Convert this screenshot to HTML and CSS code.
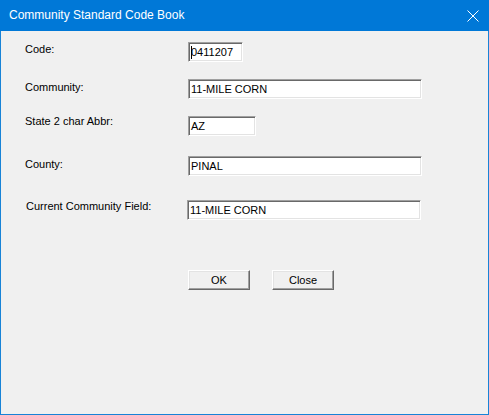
FILE: index.html
```html
<!DOCTYPE html>
<html>
<head>
<meta charset="utf-8">
<link rel="stylesheet" href="styles.css">
</head>
<body>
<div class="window">
  <div class="titlebar">
    <span class="title">Community Standard Code Book</span>
    <svg class="close" width="12" height="12" viewBox="0 0 12 12"><path d="M0.5 0.5 L11.5 11.5 M11.5 0.5 L0.5 11.5" stroke="#fff" stroke-width="1" fill="none"/></svg>
  </div>
  <div class="content">
    <div class="row">
      <span class="lbl">Code:</span>
      <div class="field w-code"><span class="caret"></span>0411207</div>
    </div>
    <div class="row row-gap">
      <span class="lbl lbl-down">Community:</span>
      <div class="field w-long">11-MILE CORN</div>
    </div>
    <div class="row row-gap">
      <span class="lbl lbl-up">State 2 char Abbr:</span>
      <div class="field w-abbr">AZ</div>
    </div>
    <div class="row row-gap-county">
      <span class="lbl lbl-down">County:</span>
      <div class="field w-long">PINAL</div>
    </div>
    <div class="row row-gap-current">
      <span class="lbl lbl-current">Current Community Field:</span>
      <div class="field w-long field-current">11-MILE CORN</div>
    </div>
    <div class="buttons">
      <button class="btn">OK</button>
      <button class="btn">Close</button>
    </div>
  </div>
</div>
</body>
</html>
```
FILE: styles.css
```css
html, body {
  margin: 0;
  padding: 0;
  background: #f0f0f0;
}
.window {
  width: 489px;
  height: 415px;
  box-sizing: border-box;
  border: 1px solid #1883d7;
  border-top: none;
  background: #f0f0f0;
  font-family: "Liberation Sans", Arial, sans-serif;
  font-size: 11px;
  color: #000;
  display: flex;
  flex-direction: column;
}
.titlebar {
  height: 31px;
  margin: 0 -1px;
  background: #0078d7;
  display: flex;
  align-items: center;
  justify-content: space-between;
  padding: 0 10px 0 9px;
  box-sizing: border-box;
}
.title {
  color: #fff;
  font-size: 12px;
  line-height: 16px;
  padding-bottom: 1px;
}
.close {
  display: block;
}
.content {
  padding: 11px 0 0 24px;
  display: flex;
  flex-direction: column;
}
.row {
  display: flex;
  align-items: flex-start;
  height: 20px;
}
.row-gap { margin-top: 17px; }
.row-gap-county { margin-top: 20px; }
.row-gap-current { margin-top: 24px; }
.lbl {
  width: 163px;
  line-height: 14px;
  flex: none;
}
.lbl-down { margin-top: 1px; }
.lbl-up { margin-top: -2px; }
.lbl-current { margin-top: -1px; padding-left: 1px; width: 162px; }
.field {
  position: relative;
  box-sizing: border-box;
  height: 20px;
  background: #fff;
  border: 1px solid;
  border-color: #a0a0a0 #ffffff #ffffff #a0a0a0;
  box-shadow: inset 1px 1px 0 #696969, inset -1px -1px 0 #e3e3e3;
  padding: 2px 0 0 2px;
  line-height: 14px;
  white-space: nowrap;
  overflow: hidden;
}
.field-current { margin-left: -1px; }
.w-code { width: 55px; }
.w-long { width: 234px; }
.w-abbr { width: 68px; }
.caret {
  position: absolute;
  left: 2px;
  top: 3px;
  width: 1px;
  height: 13px;
  background: #000;
}
.buttons {
  display: flex;
  gap: 22px;
  margin-top: 50px;
  padding-left: 163px;
}
.btn {
  width: 62px;
  height: 20px;
  box-sizing: border-box;
  font-family: "Liberation Sans", Arial, sans-serif;
  font-size: 11px;
  color: #000;
  background: #f0f0f0;
  border: 1px solid;
  border-color: #ffffff #696969 #696969 #ffffff;
  box-shadow: inset -1px -1px 0 #a0a0a0, inset 1px 1px 0 #e3e3e3;
  padding: 0;
  margin: 0;
  line-height: 16px;
}
```
